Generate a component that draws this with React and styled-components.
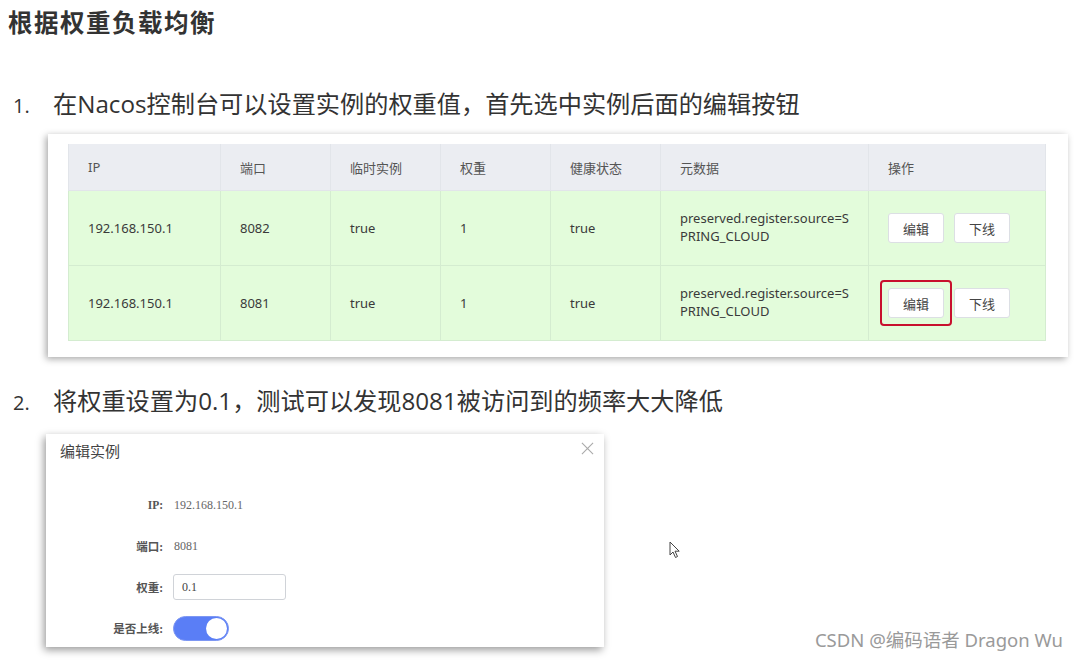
import React from 'react'
import styled, { createGlobalStyle } from 'styled-components'

const GlobalStyle = createGlobalStyle`
  html, body {
    margin: 0;
    padding: 0;
    background: #fff;
    font-family: "Noto Sans", "Noto Sans CJK SC", sans-serif;
    color: #333;
  }
`

const rows = [
  { ip: '192.168.150.1', port: '8082', marked: false },
  { ip: '192.168.150.1', port: '8081', marked: true },
]

const columns = [
  { title: 'IP', width: 152 },
  { title: '端口', width: 110 },
  { title: '临时实例', width: 110 },
  { title: '权重', width: 110 },
  { title: '健康状态', width: 110 },
  { title: '元数据', width: 208 },
  { title: '操作', width: 177 },
]

const App = () => {
  return (
    <Page>
      <GlobalStyle />
      <Title>根据权重负载均衡</Title>

      <Step $top={49}>
        <StepNum>1.</StepNum>
        <span>在Nacos控制台可以设置实例的权重值，首先选中实例后面的编辑按钮</span>
      </Step>

      <ShotCard>
        <Table>
          <colgroup>
            {columns.map((c) => (
              <col key={c.title} style={{ width: c.width }} />
            ))}
          </colgroup>
          <thead>
            <tr>
              {columns.map((c) => (
                <Th key={c.title}>{c.title}</Th>
              ))}
            </tr>
          </thead>
          <tbody>
            {rows.map((r) => (
              <tr key={r.port}>
                <Td>{r.ip}</Td>
                <Td>{r.port}</Td>
                <Td>true</Td>
                <Td>1</Td>
                <Td>true</Td>
                <Td>
                  <Meta>
                    preserved.register.source=S
                    <br />
                    PRING_CLOUD
                  </Meta>
                </Td>
                <Td>
                  <Actions>
                    <Highlight $on={r.marked}>
                      <ActionButton>编辑</ActionButton>
                    </Highlight>
                    <ActionButton>下线</ActionButton>
                  </Actions>
                </Td>
              </tr>
            ))}
          </tbody>
        </Table>
      </ShotCard>

      <Step $top={27}>
        <StepNum>2.</StepNum>
        <span>将权重设置为0.1，测试可以发现8081被访问到的频率大大降低</span>
      </Step>

      <Dialog>
        <DialogHead>
          <DialogTitle>编辑实例</DialogTitle>
          <CloseIcon viewBox="0 0 14 14">
            <path d="M1 1 L13 13 M13 1 L1 13" stroke="#aaa" strokeWidth="1.2" fill="none" />
          </CloseIcon>
        </DialogHead>
        <Form>
          <FormRow>
            <Label>IP:</Label>
            <Value>192.168.150.1</Value>
          </FormRow>
          <FormRow>
            <Label>端口:</Label>
            <Value>8081</Value>
          </FormRow>
          <FormRow>
            <Label>权重:</Label>
            <Input>0.1</Input>
          </FormRow>
          <FormRow>
            <Label>是否上线:</Label>
            <Switch>
              <Knob />
            </Switch>
          </FormRow>
        </Form>
      </Dialog>

      <Cursor viewBox="0 0 12 18">
        <path d="M1 1 L1 14 L4 11 L6.5 16.5 L8.5 15.5 L6 10.2 L10.2 10.2 Z" fill="#fff" stroke="#444" strokeWidth="1" strokeLinejoin="round" />
      </Cursor>
      <Watermark>CSDN @编码语者 Dragon Wu</Watermark>
    </Page>
  )
}

const Page = styled.div`
  position: relative;
  width: 1078px;
  height: 660px;
  overflow: hidden;
  display: flex;
  flex-direction: column;
  align-items: flex-start;
`
const Title = styled.h1`
  margin: 8px 0 0 8px;
  font-size: 24.5px;
  line-height: 30px;
  font-weight: 700;
  color: #333;
  letter-spacing: 1.5px;
`
const Step = styled.div`
  margin-top: ${(p) => p.$top}px;
  display: flex;
  align-items: baseline;
  height: 34px;
  line-height: 34px;
  font-size: 24.2px;
  color: #333;
  font-family: "Open Sans", "Noto Sans CJK SC", sans-serif;
`
const StepNum = styled.span`
  width: 40px;
  padding-left: 13px;
  font-size: 20px;
`
const ShotCard = styled.div`
  margin: 13px 0 0 48px;
  width: 1020px;
  height: 223px;
  box-sizing: border-box;
  padding: 10px 23px 0 20px;
  background: #fff;
  box-shadow: -2px 2px 7px rgba(0, 0, 0, 0.35);
`
const Table = styled.table`
  width: 977px;
  border-collapse: collapse;
  table-layout: fixed;
  font-size: 13px;
  font-family: "Noto Sans", "Noto Sans CJK SC", sans-serif;
`
const Th = styled.th`
  height: 46px;
  padding: 0 0 0 19px;
  text-align: left;
  font-weight: 400;
  color: #555;
  background: #ebedf2;
  border: 1px solid #e2e5ea;
  border-top: none;
`
const Td = styled.td`
  height: 74px;
  padding: 0 0 0 19px;
  color: #3a3a3a;
  background: #e3fcdb;
  border: 1px solid #d4ecd0;
`
const Meta = styled.div`
  line-height: 18px;
  margin-top: -2px;
`
const Actions = styled.div`
  display: flex;
  align-items: center;
  gap: 10px;
`
const Highlight = styled.div`
  margin: -8px;
  padding: 6px;
  border: 2px solid ${(p) => (p.$on ? '#c8102e' : 'transparent')};
  border-radius: 4px;
`
const ActionButton = styled.button`
  width: 56px;
  height: 30px;
  padding: 0;
  background: #fff;
  border: 1px solid #dcdfe4;
  border-radius: 3px;
  font-size: 13px;
  color: #444;
  font-family: "Noto Sans CJK SC", sans-serif;
`
const Dialog = styled.div`
  margin: 16px 0 0 46px;
  width: 558px;
  height: 213px;
  flex-shrink: 0;
  box-sizing: border-box;
  background: #fff;
  box-shadow: -2px 3px 8px rgba(0, 0, 0, 0.4);
`
const DialogHead = styled.div`
  display: flex;
  justify-content: space-between;
  align-items: flex-start;
  padding: 7px 10px 0 14px;
`
const DialogTitle = styled.div`
  font-size: 15px;
  line-height: 20px;
  color: #444;
  font-family: "Noto Sans CJK SC", sans-serif;
`
const CloseIcon = styled.svg`
  width: 13px;
  height: 13px;
  margin-top: 1px;
`
const Form = styled.div`
  display: flex;
  flex-direction: column;
  gap: 15px;
  margin-top: 31px;
`
const FormRow = styled.div`
  display: flex;
  align-items: center;
  height: 26px;
`
const Label = styled.div`
  width: 117px;
  text-align: right;
  font-size: 11.5px;
  font-weight: 700;
  color: #555;
  font-family: "Liberation Serif", "Noto Sans CJK SC", serif;
`
const Value = styled.div`
  margin-left: 11px;
  font-size: 12px;
  color: #666;
  font-family: "Liberation Serif", serif;
`
const Input = styled.div`
  margin-left: 10px;
  width: 113px;
  height: 26px;
  box-sizing: border-box;
  padding: 0 8px;
  line-height: 24px;
  border: 1px solid #d0d3d8;
  border-radius: 3px;
  font-size: 12px;
  color: #444;
  font-family: "Liberation Serif", serif;
`
const Switch = styled.div`
  margin-left: 10px;
  width: 56px;
  height: 25px;
  box-sizing: border-box;
  border-radius: 13px;
  background: #5a7ef6;
  border: 1px solid #7d97f3;
  display: flex;
  justify-content: flex-end;
  align-items: center;
  padding: 0 1px;
`
const Knob = styled.div`
  width: 21px;
  height: 21px;
  border-radius: 50%;
  background: #fff;
`
const Cursor = styled.svg`
  position: absolute;
  left: 669px;
  top: 541px;
  width: 12px;
  height: 18px;
`
const Watermark = styled.div`
  position: absolute;
  right: 15px;
  top: 626px;
  font-size: 18.5px;
  color: #9a9a9a;
  font-family: "Noto Sans", "Noto Sans CJK SC", sans-serif;
`

export default App
